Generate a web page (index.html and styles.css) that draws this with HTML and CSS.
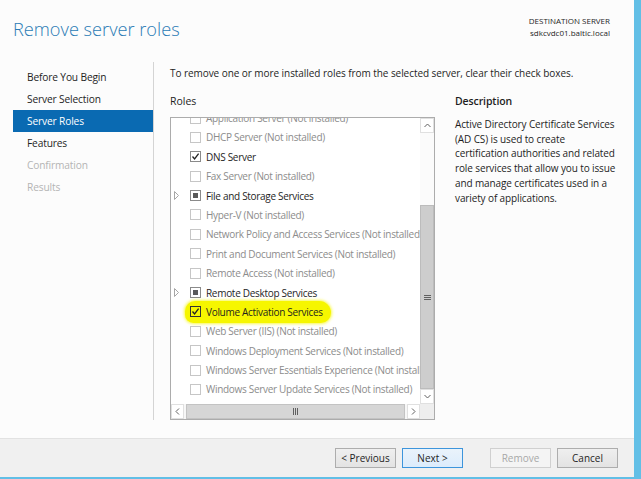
FILE: index.html
```html
<!DOCTYPE html>
<html>
<head>
<meta charset="utf-8">
<link rel="stylesheet" href="styles.css">
</head>
<body>
<div class="window">
  <header class="header">
    <h1 class="title">Remove server roles</h1>
    <div class="dest">
      <div class="dest-label">DESTINATION SERVER</div>
      <div class="dest-name">sdkcvdc01.baltic.local</div>
    </div>
  </header>
  <div class="main">
    <nav class="nav">
      <div class="nav-item">Before You Begin</div>
      <div class="nav-item">Server Selection</div>
      <div class="nav-item active">Server Roles</div>
      <div class="nav-item">Features</div>
      <div class="nav-item disabled">Confirmation</div>
      <div class="nav-item disabled">Results</div>
    </nav>
    <section class="content">
      <p class="intro">To remove one or more installed roles from the selected server, clear their check boxes.</p>
      <div class="columns">
        <div class="roles-col">
          <div class="col-head">Roles</div>
          <div class="listbox">
            <div class="list-area">
              <div class="rows">
                <div class="row na"><span class="exp"></span><span class="cb"></span><span class="lbl">Application Server (Not installed)</span></div>
                <div class="row na"><span class="exp"></span><span class="cb"></span><span class="lbl">DHCP Server (Not installed)</span></div>
                <div class="row"><span class="exp"></span><span class="cb checked"><svg viewBox="0 0 9 9" width="9" height="9"><path d="M1.5 4.5 L3.6 7 L7.6 1.6" fill="none" stroke="#222" stroke-width="1.3"/></svg></span><span class="lbl">DNS Server</span></div>
                <div class="row na"><span class="exp"></span><span class="cb"></span><span class="lbl">Fax Server (Not installed)</span></div>
                <div class="row"><span class="exp"><svg viewBox="0 0 5 9" width="5" height="9"><path d="M0.5 0.5 L4.5 4.5 L0.5 8.5 Z" fill="none" stroke="#a6a6a6" stroke-width="1"/></svg></span><span class="cb partial"><span class="dot"></span></span><span class="lbl">File and Storage Services</span></div>
                <div class="row na"><span class="exp"></span><span class="cb"></span><span class="lbl">Hyper-V (Not installed)</span></div>
                <div class="row na"><span class="exp"></span><span class="cb"></span><span class="lbl">Network Policy and Access Services (Not installed)</span></div>
                <div class="row na"><span class="exp"></span><span class="cb"></span><span class="lbl">Print and Document Services (Not installed)</span></div>
                <div class="row na"><span class="exp"></span><span class="cb"></span><span class="lbl">Remote Access (Not installed)</span></div>
                <div class="row"><span class="exp"><svg viewBox="0 0 5 9" width="5" height="9"><path d="M0.5 0.5 L4.5 4.5 L0.5 8.5 Z" fill="none" stroke="#a6a6a6" stroke-width="1"/></svg></span><span class="cb partial"><span class="dot"></span></span><span class="lbl">Remote Desktop Services</span></div>
                <div class="row"><span class="exp"></span><span class="mark"><span class="cb checked"><svg viewBox="0 0 9 9" width="9" height="9"><path d="M1.5 4.5 L3.6 7 L7.6 1.6" fill="none" stroke="#222" stroke-width="1.3"/></svg></span><span class="lbl">Volume Activation Services</span></span></div>
                <div class="row na"><span class="exp"></span><span class="cb"></span><span class="lbl">Web Server (IIS) (Not installed)</span></div>
                <div class="row na"><span class="exp"></span><span class="cb"></span><span class="lbl">Windows Deployment Services (Not installed)</span></div>
                <div class="row na"><span class="exp"></span><span class="cb"></span><span class="lbl">Windows Server Essentials Experience (Not installed)</span></div>
                <div class="row na"><span class="exp"></span><span class="cb"></span><span class="lbl">Windows Server Update Services (Not installed)</span></div>
              </div>
            </div>
            <div class="vscroll">
              <div class="sbtn"><svg viewBox="0 0 7 5" width="7" height="5"><path d="M0.5 4 L3.5 1 L6.5 4" fill="none" stroke="#606060" stroke-width="1"/></svg></div>
              <div class="vtrack"><div class="vthumb"><svg viewBox="0 0 7 7" width="7" height="7"><path d="M0 1.5 H7 M0 3.5 H7 M0 5.5 H7" stroke="#606060" stroke-width="1"/></svg></div></div>
              <div class="sbtn"><svg viewBox="0 0 7 5" width="7" height="5"><path d="M0.5 1 L3.5 4 L6.5 1" fill="none" stroke="#606060" stroke-width="1"/></svg></div>
            </div>
            <div class="hscroll">
              <div class="sbtn"><svg viewBox="0 0 5 7" width="5" height="7"><path d="M4 0.5 L1 3.5 L4 6.5" fill="none" stroke="#606060" stroke-width="1"/></svg></div>
              <div class="hthumb"><svg viewBox="0 0 7 7" width="7" height="7"><path d="M1.5 0 V7 M3.5 0 V7 M5.5 0 V7" stroke="#606060" stroke-width="1"/></svg></div>
              <div class="sbtn"><svg viewBox="0 0 5 7" width="5" height="7"><path d="M1 0.5 L4 3.5 L1 6.5" fill="none" stroke="#606060" stroke-width="1"/></svg></div>
            </div>
            <div class="corner"></div>
          </div>
        </div>
        <div class="desc-col">
          <div class="col-head">Description</div>
          <p class="desc">Active Directory Certificate Services<br>(AD CS) is used to create<br>certification authorities and related<br>role services that allow you to issue<br>and manage certificates used in a<br>variety of applications.</p>
        </div>
      </div>
    </section>
  </div>
  <footer class="footer">
    <button class="btn">&lt; Previous</button>
    <button class="btn primary">Next &gt;</button>
    <button class="btn off gap">Remove</button>
    <button class="btn">Cancel</button>
  </footer>
</div>
</body>
</html>
```
FILE: styles.css
```css
* { box-sizing: border-box; }
html, body { margin: 0; padding: 0; }
body {
  font-family: "Open Sans", "Noto Sans", sans-serif;
  font-size: 10px;
  color: #1e1e1e;
  background: #fcfcfc;
}
.window {
  width: 641px;
  height: 479px;
  background: #fcfcfc;
  border-right: 7px solid #62bfe6;
  border-bottom: 2px solid #62bfe6;
  display: flex;
  flex-direction: column;
}
.header {
  height: 60px;
  display: flex;
  justify-content: space-between;
  align-items: flex-start;
  padding: 0 24px 0 13px;
}
.title {
  margin: 17px 0 0 0;
  font-weight: 300;
  font-size: 18.2px;
  line-height: 24px;
  color: #2a7bb5;
}
.dest {
  margin-top: 15px;
  text-align: right;
  font-size: 8px;
  line-height: 12px;
  color: #1e1e1e;
}
.main {
  flex: 1;
  display: flex;
  min-height: 0;
}
.nav {
  width: 154px;
  margin: 2px 0 18px 0;
  padding-top: 4px;
  border-right: 1px solid #d4d4d4;
}
.nav-item {
  margin-left: 13px;
  height: 22px;
  line-height: 23px;
  padding-left: 14px;
  font-size: 10.2px;
  letter-spacing: -0.15px;
  color: #1e1e1e;
}
.nav-item.active {
  background: #0a6ab2;
  color: #ffffff;
}
.nav-item.disabled { color: #b4b4b4; }
.content {
  flex: 1;
  padding: 5px 0 0 16px;
}
.intro {
  margin: 0;
  line-height: 16px;
  letter-spacing: -0.06px;
}
.columns {
  margin-top: 12px;
  display: flex;
  gap: 20px;
}
.roles-col { width: 265px; }
.col-head {
  line-height: 16px;
  height: 16px;
  font-size: 10.5px;
}
.desc-col .col-head { font-weight: 600; letter-spacing: -0.1px; }
.listbox {
  margin-top: 8px;
  width: 265px;
  height: 303px;
  border: 1px solid #acacac;
  background: #ffffff;
  display: grid;
  grid-template-columns: 1fr 14px;
  grid-template-rows: 1fr 15px;
}
.list-area {
  overflow: hidden;
}
.rows { margin-top: -9.7px; }
.row {
  height: 19.4px;
  display: flex;
  align-items: center;
  white-space: nowrap;
  letter-spacing: -0.3px;
}
.exp {
  width: 19px;
  padding-left: 3px;
  display: flex;
  align-items: center;
  flex: none;
}
.cb {
  width: 11px;
  height: 11px;
  border: 1px solid #8a8a8a;
  background: #ffffff;
  flex: none;
  display: flex;
  align-items: center;
  justify-content: center;
}
.row.na .cb { border-color: #c6c6c6; }
.row.na .lbl { color: #8c8c8c; }
.lbl { margin-left: 5px; }
.partial .dot {
  width: 5px;
  height: 5px;
  background: #5a5a5a;
}
.mark {
  display: flex;
  align-items: center;
  background: #f6f600;
  border-radius: 12px 14px 12px 10px;
  padding: 4px 8px 4px 5px;
  margin: -4px -8px -4px -5px;
  box-shadow: 0 0 3px 1px rgba(246,246,0,0.7);
}
.mark .cb { background: #f6f600; border-color: #333; }
.vscroll {
  grid-row: 1;
  grid-column: 2;
  display: flex;
  flex-direction: column;
  background: #f7f7f7;
}
.sbtn {
  flex: none;
  width: 14px;
  height: 15px;
  display: flex;
  align-items: center;
  justify-content: center;
  background: #ffffff;
  border: 1px solid #e0e0e0;
}
.vtrack {
  flex: 1;
  display: flex;
  flex-direction: column;
  justify-content: flex-end;
  background: #fbfbfb;
}
.vthumb {
  height: 184px;
  background: #cdcdcd;
  border: 1px solid #bcbcbc;
  display: flex;
  align-items: center;
  justify-content: center;
}
.hscroll {
  grid-row: 2;
  grid-column: 1;
  display: flex;
  background: #f7f7f7;
}
.hscroll .sbtn { width: 13px; height: 15px; }
.hthumb {
  flex: 1;
  margin: 0 2px;
  background: #d6d6d6;
  border: 1px solid #c3c3c3;
  display: flex;
  align-items: center;
  justify-content: center;
}
.corner {
  grid-row: 2;
  grid-column: 2;
  background: #eeeeee;
}
.desc-col { flex: 1; }
.desc {
  margin: 8px 0 0 0;
  line-height: 14.7px;
  letter-spacing: -0.12px;
}
.footer {
  height: 39px;
  flex: none;
  background: #f0f0f0;
  border-top: 1px solid #e2e2e2;
  display: flex;
  justify-content: flex-end;
  align-items: center;
  gap: 6px;
  padding-right: 16px;
}
.btn {
  width: 61px;
  height: 20px;
  margin: 0;
  padding: 0;
  font-family: inherit;
  font-size: 10px;
  color: #1e1e1e;
  background: linear-gradient(#efefef, #e3e3e3);
  border: 1px solid #adadad;
}
.btn.primary {
  border-color: #3d95dc;
  background: linear-gradient(#eaf3fb, #dcecfc);
}
.btn.off {
  color: #a8a8a8;
  background: #f4f4f4;
  border-color: #d0d0d0;
}
.btn.gap { margin-left: 21px; }
```
